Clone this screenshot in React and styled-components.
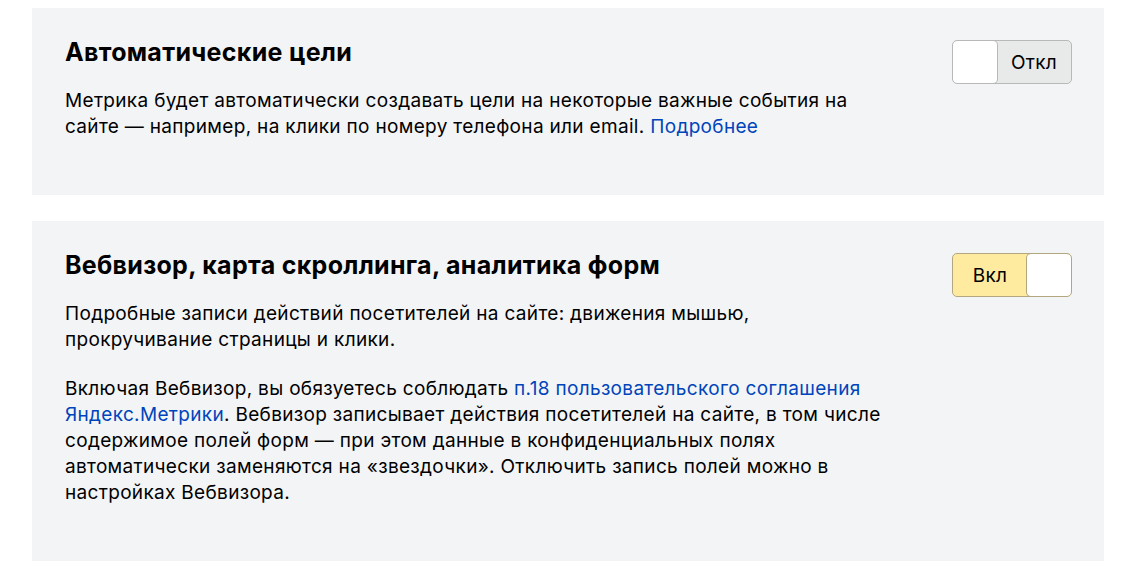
import React from "react";
import styled, { createGlobalStyle } from "styled-components";

const Global = createGlobalStyle`
  html, body { margin: 0; padding: 0; background: #fff; }
  body { font-family: Inter, "Noto Sans", sans-serif; color: #000; }
`;

const Page = styled.div`
  display: flex;
  flex-direction: column;
  gap: 26px;
  padding: 8px 44px 0 32px;
`;

const Card = styled.section`
  background: #f3f4f6;
  display: flex;
  justify-content: space-between;
  align-items: flex-start;
  padding: 28px 32px 55px 33px;
`;

const Content = styled.div`
  max-width: 816px;
`;

const Title = styled.h2`
  margin: 0 0 20px;
  font-size: 25px;
  line-height: 32px;
  font-weight: 700;
  letter-spacing: 0.3px;
`;

const Text = styled.p`
  margin: 0;
  font-size: 19px;
  line-height: 26px;
  letter-spacing: 0.32px;
  & + & { margin-top: 23px; }
`;

const Link = styled.a`
  color: #0044bb;
  text-decoration: none;
`;

const Toggle = styled.div`
  flex: none;
  margin-top: 4px;
  width: 120px;
  height: 44px;
  box-sizing: border-box;
  border: 1px solid ${p => (p.$on ? "#b3a77f" : "#b8b8b8")};
  border-radius: 5px;
  background: ${p => (p.$on ? "#ffeba0" : "#e8e9e9")};
  display: flex;
  flex-direction: ${p => (p.$on ? "row-reverse" : "row")};
  overflow: hidden;
`;

const Knob = styled.div`
  width: 44px;
  height: 100%;
  box-sizing: border-box;
  background: #fff;
  border-radius: 4px;
  box-shadow: 0 0 0 1px ${p => (p.$on ? "#b3a77f" : "#b8b8b8")};
`;

const Label = styled.span`
  flex: 1;
  display: flex;
  align-items: center;
  justify-content: center;
  font-size: 19px;
  letter-spacing: 0.3px;
`;

export default function App() {
  return (
    <>
      <Global />
      <Page>
        <Card>
          <Content>
            <Title>Автоматические цели</Title>
            <Text>
              Метрика будет автоматически создавать цели на некоторые важные события на
              сайте — например, на клики по номеру телефона или email.{" "}
              <Link href="#">Подробнее</Link>
            </Text>
          </Content>
          <Toggle>
            <Knob />
            <Label>Откл</Label>
          </Toggle>
        </Card>
        <Card>
          <Content>
            <Title>Вебвизор, карта скроллинга, аналитика форм</Title>
            <Text>
              Подробные записи действий посетителей на сайте: движения мышью,
              прокручивание страницы и клики.
            </Text>
            <Text>
              Включая Вебвизор, вы обязуетесь соблюдать{" "}
              <Link href="#">п.18 пользовательского соглашения Яндекс.Метрики</Link>.
              Вебвизор записывает действия посетителей на сайте, в том числе
              содержимое полей форм — при этом данные в конфиденциальных полях
              автоматически заменяются на «звездочки». Отключить запись полей можно в
              настройках Вебвизора.
            </Text>
          </Content>
          <Toggle $on>
            <Knob $on />
            <Label>Вкл</Label>
          </Toggle>
        </Card>
      </Page>
    </>
  );
}
